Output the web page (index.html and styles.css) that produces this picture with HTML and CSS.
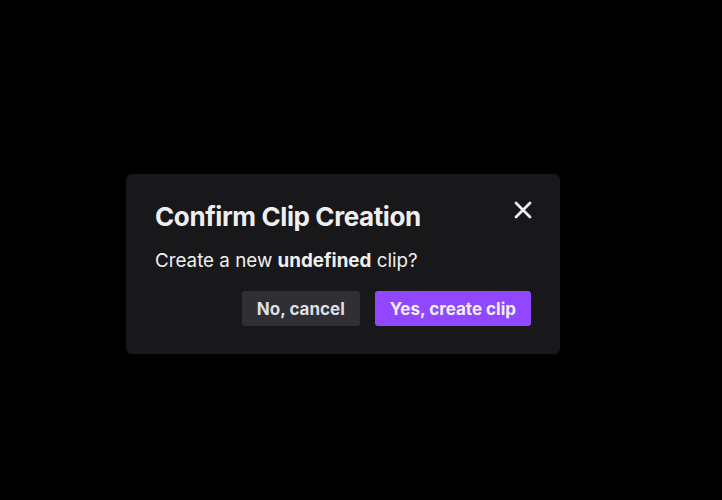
FILE: index.html
```html
<!DOCTYPE html>
<html>
<head>
<meta charset="utf-8">
<link rel="stylesheet" href="styles.css">
</head>
<body>
<div class="stage">
  <div class="modal">
    <div class="head">
      <h2 class="title">Confirm Clip Creation</h2>
      <button class="close" aria-label="Close">
        <svg width="20" height="20" viewBox="0 0 20 20"><path d="M3 3 L17 17 M17 3 L3 17" stroke="#efeff1" stroke-width="2.8" stroke-linecap="round"/></svg>
      </button>
    </div>
    <p class="msg">Create a new <strong>undefined</strong> clip?</p>
    <div class="actions">
      <button class="btn btn-secondary">No, cancel</button>
      <button class="btn btn-primary">Yes, create clip</button>
    </div>
  </div>
</div>
</body>
</html>
```
FILE: styles.css
```css
html, body {
  margin: 0;
  padding: 0;
  background: #000;
  height: 100%;
}
body {
  font-family: Inter, "Noto Sans", sans-serif;
  color: #efeff1;
}
.stage {
  height: 500px;
  display: flex;
  align-items: flex-start;
  padding-left: 126px;
  padding-top: 174px;
  box-sizing: border-box;
}
.modal {
  width: 434px;
  height: 180px;
  box-sizing: border-box;
  background: #18181b;
  border-radius: 6px;
  padding: 25px 29px 0 29px;
}
.head {
  display: flex;
  justify-content: space-between;
  align-items: flex-start;
}
.title {
  margin: 0;
  font-size: 26px;
  font-weight: 700;
  line-height: 36px;
  letter-spacing: -0.4px;
}
.close {
  background: none;
  border: 0;
  padding: 0;
  margin-top: 1px;
  margin-right: -2px;
  width: 20px;
  height: 20px;
  cursor: pointer;
}
.close svg { display: block; }
.msg {
  margin: 14px 0 0 0;
  font-size: 18.8px;
  line-height: 24px;
}
.msg strong { font-weight: 700; }
.actions {
  display: flex;
  justify-content: flex-end;
  gap: 15px;
  margin-top: 18px;
}
.btn {
  font-family: Inter, "Noto Sans", sans-serif;
  font-size: 17px;
  font-weight: 700;
  height: 35px;
  border: 0;
  border-radius: 3px;
  padding: 0 15px;
  color: #efeff1;
}
.btn-secondary {
  background: #2f2f35;
  color: #dedee3;
}
.btn-primary {
  background: #9147ff;
}
```
